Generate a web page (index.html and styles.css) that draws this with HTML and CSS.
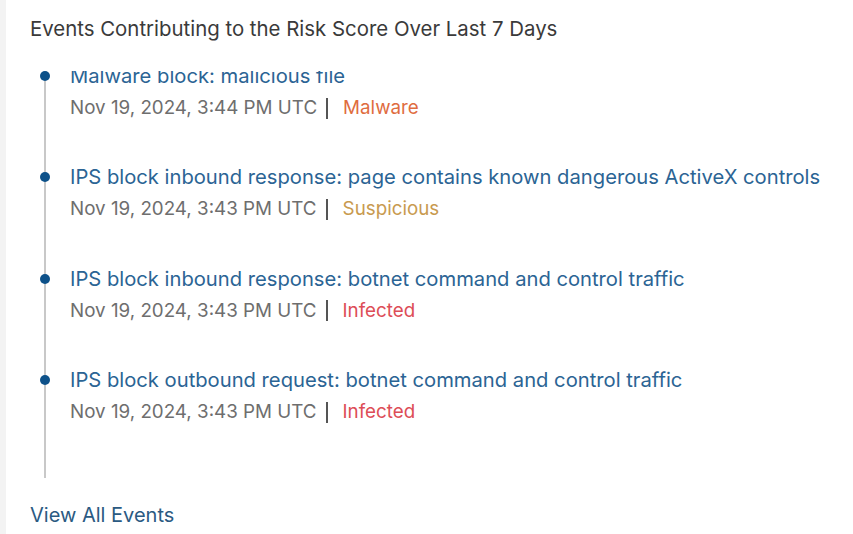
FILE: index.html
```html
<!DOCTYPE html>
<html lang="en">
<head>
    <meta charset="UTF-8">
    <title>Events Contributing to the Risk Score</title>
    <link rel="stylesheet" href="styles.css">
</head>
<body>

<div class="panel">
    <h3 class="panel-title">Events Contributing to the Risk Score Over Last 7 Days</h3>

    <!-- timeline list, scrolled a little so the first title is cut -->
    <div class="timeline-scroll">
        <ul class="timeline">
            <li class="event">
                <span class="dot"></span>
                <div class="event-title">Malware block: malicious file</div>
                <div class="event-meta">
                    <span class="event-date">Nov 19, 2024, 3:44 PM UTC</span>
                    <span class="sep"></span>
                    <span class="tag tag-malware">Malware</span>
                </div>
            </li>
            <li class="event">
                <span class="dot"></span>
                <div class="event-title">IPS block inbound response: page contains known dangerous ActiveX controls</div>
                <div class="event-meta">
                    <span class="event-date">Nov 19, 2024, 3:43 PM UTC</span>
                    <span class="sep"></span>
                    <span class="tag tag-suspicious">Suspicious</span>
                </div>
            </li>
            <li class="event">
                <span class="dot"></span>
                <div class="event-title">IPS block inbound response: botnet command and control traffic</div>
                <div class="event-meta">
                    <span class="event-date">Nov 19, 2024, 3:43 PM UTC</span>
                    <span class="sep"></span>
                    <span class="tag tag-infected">Infected</span>
                </div>
            </li>
            <li class="event">
                <span class="dot"></span>
                <div class="event-title">IPS block outbound request: botnet command and control traffic</div>
                <div class="event-meta">
                    <span class="event-date">Nov 19, 2024, 3:43 PM UTC</span>
                    <span class="sep"></span>
                    <span class="tag tag-infected">Infected</span>
                </div>
            </li>
        </ul>
    </div>

    <a class="view-all" href="#">View All Events</a>
</div>

</body>
</html>
```

FILE: styles.css
```css
html, body {
    margin: 0;
    height: 100%;
}
body {
    font-family: 'Inter', 'Noto Sans', sans-serif;
    background: #f3f3f3;
    padding-left: 6px;
    box-sizing: border-box;
}
.panel {
    background: #fff;
    height: 100%;
    padding: 16px 0 0 24px;
    box-sizing: border-box;
}
.panel-title {
    margin: 0;
    font-size: 20.4px;
    font-weight: 400;
    color: #3a3a3a;
    line-height: 26px;
}
.timeline-scroll {
    margin-top: 29px;
    margin-left: 6px;
    padding-left: 8px;
    height: 407px;
    overflow: hidden;
}
.timeline {
    list-style: none;
    margin: -10px 0 0 0;
    padding: 0 0 14px 0;
    border-left: 2px solid #c8c8c8;
}
.event {
    position: relative;
    padding-left: 24px;
    height: 101.4px;
}
.dot {
    position: absolute;
    left: -6px;
    top: 10px;
    width: 10px;
    height: 10px;
    border-radius: 50%;
    background: #0d5189;
}
.event-title {
    font-size: 20.2px;
    line-height: 30px;
    color: #2b6494;
    white-space: nowrap;
}
.event-meta {
    display: flex;
    align-items: center;
    margin-top: 1px;
    font-size: 18.8px;
    line-height: 32px;
}
.event-date {
    color: #6e6e6e;
}
.sep {
    width: 2px;
    height: 21px;
    background: #555;
    margin: 0 15px 0 9px;
}
.tag-malware {
    color: #df6d3f;
}
.tag-suspicious {
    color: #c89a4f;
}
.tag-infected {
    color: #dd4d57;
}
.view-all {
    display: block;
    margin-top: 25px;
    font-size: 20px;
    color: #2b5a82;
    text-decoration: none;
}
```
